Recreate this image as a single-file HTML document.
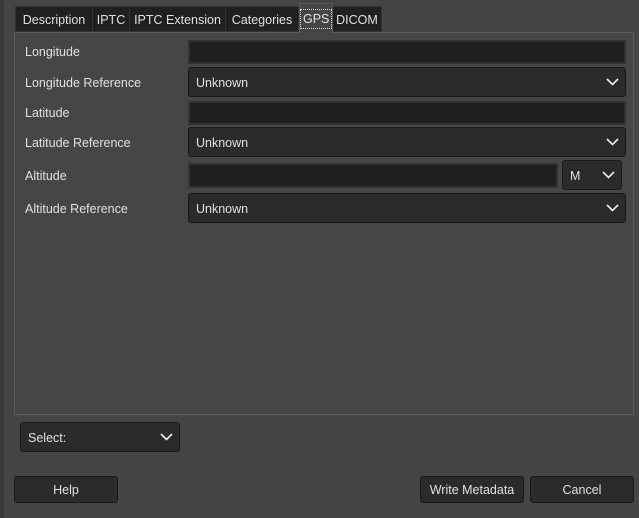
<!DOCTYPE html>
<html><head><style>
*{box-sizing:border-box;margin:0;padding:0}
body{width:639px;height:518px;background:#454545;font-family:"Liberation Sans",sans-serif;font-size:12.5px;color:#dcdcdc;position:relative;overflow:hidden}
.a{position:absolute}
.strip{left:0;top:0;width:4px;height:518px;background:#3a3a3a}
.tab{position:absolute;top:6px;height:26px;background:#202020;border:1px solid #333;line-height:27px;text-align:center;color:#e0e0e0}
.tab.sel{top:3px;height:30px;background:#454545;border:1px solid #5a5a5a;border-bottom:none}
.tab.sel span{border:1px dotted #ddd;padding:0 2px;line-height:18px;display:inline-block;margin-top:5px}
.panel{left:14px;top:32px;width:620px;height:383px;border:1px solid #5c5c5c;background:#464646}
.lbl{position:absolute;left:25px;color:#e0e0e0;margin-top:1px}
.entry{position:absolute;background:#1f1f1f;border:2px solid #323232}
.combo{position:absolute;background:#2b2b2b;border:1px solid #191919;border-radius:3px;line-height:30px;padding-left:7px;color:#e0e0e0}
.combo svg{position:absolute;right:6px;top:10px}
.btn{position:absolute;background:#2b2b2b;border:1px solid #191919;border-radius:3px;text-align:center;line-height:27px;color:#e0e0e0}
</style></head><body>
<div class="a strip"></div>
<div class="tab" style="left:15px;width:78px">Description</div>
<div class="tab" style="left:92px;width:38px">IPTC</div>
<div class="tab" style="left:129px;width:97px">IPTC Extension</div>
<div class="tab" style="left:225px;width:74px">Categories</div>
<div class="tab" style="left:332px;width:50px">DICOM</div>
<div class="a panel"></div>
<div class="tab sel" style="left:299px;width:34px"><span>GPS</span></div>

<div class="lbl" style="top:44px">Longitude</div>
<div class="entry" style="left:188px;top:40px;width:438px;height:24px"></div>
<div class="lbl" style="top:75px">Longitude Reference</div>
<div class="combo" style="left:188px;top:67px;width:438px;height:30px">Unknown<svg width="13" height="8"><path d="M1 1L6.5 6.5L12 1" stroke="#eee" stroke-width="1.6" fill="none"/></svg></div>
<div class="lbl" style="top:105px">Latitude</div>
<div class="entry" style="left:188px;top:101px;width:438px;height:24px"></div>
<div class="lbl" style="top:135px">Latitude Reference</div>
<div class="combo" style="left:188px;top:127px;width:438px;height:30px">Unknown<svg width="13" height="8"><path d="M1 1L6.5 6.5L12 1" stroke="#eee" stroke-width="1.6" fill="none"/></svg></div>
<div class="lbl" style="top:168px">Altitude</div>
<div class="entry" style="left:188px;top:163px;width:370px;height:25px"></div>
<div class="combo" style="left:562px;top:160px;width:60px;height:30px">M<svg width="13" height="8"><path d="M1 1L6.5 6.5L12 1" stroke="#eee" stroke-width="1.6" fill="none"/></svg></div>
<div class="lbl" style="top:201px">Altitude Reference</div>
<div class="combo" style="left:188px;top:193px;width:438px;height:30px">Unknown<svg width="13" height="8"><path d="M1 1L6.5 6.5L12 1" stroke="#eee" stroke-width="1.6" fill="none"/></svg></div>

<div class="combo" style="left:20px;top:422px;width:160px;height:30px">Select:<svg width="13" height="8"><path d="M1 1L6.5 6.5L12 1" stroke="#eee" stroke-width="1.6" fill="none"/></svg></div>
<div class="btn" style="left:14px;top:476px;width:104px;height:27px">Help</div>
<div class="btn" style="left:420px;top:476px;width:104px;height:27px">Write Metadata</div>
<div class="btn" style="left:530px;top:476px;width:104px;height:27px">Cancel</div>
</body></html>
